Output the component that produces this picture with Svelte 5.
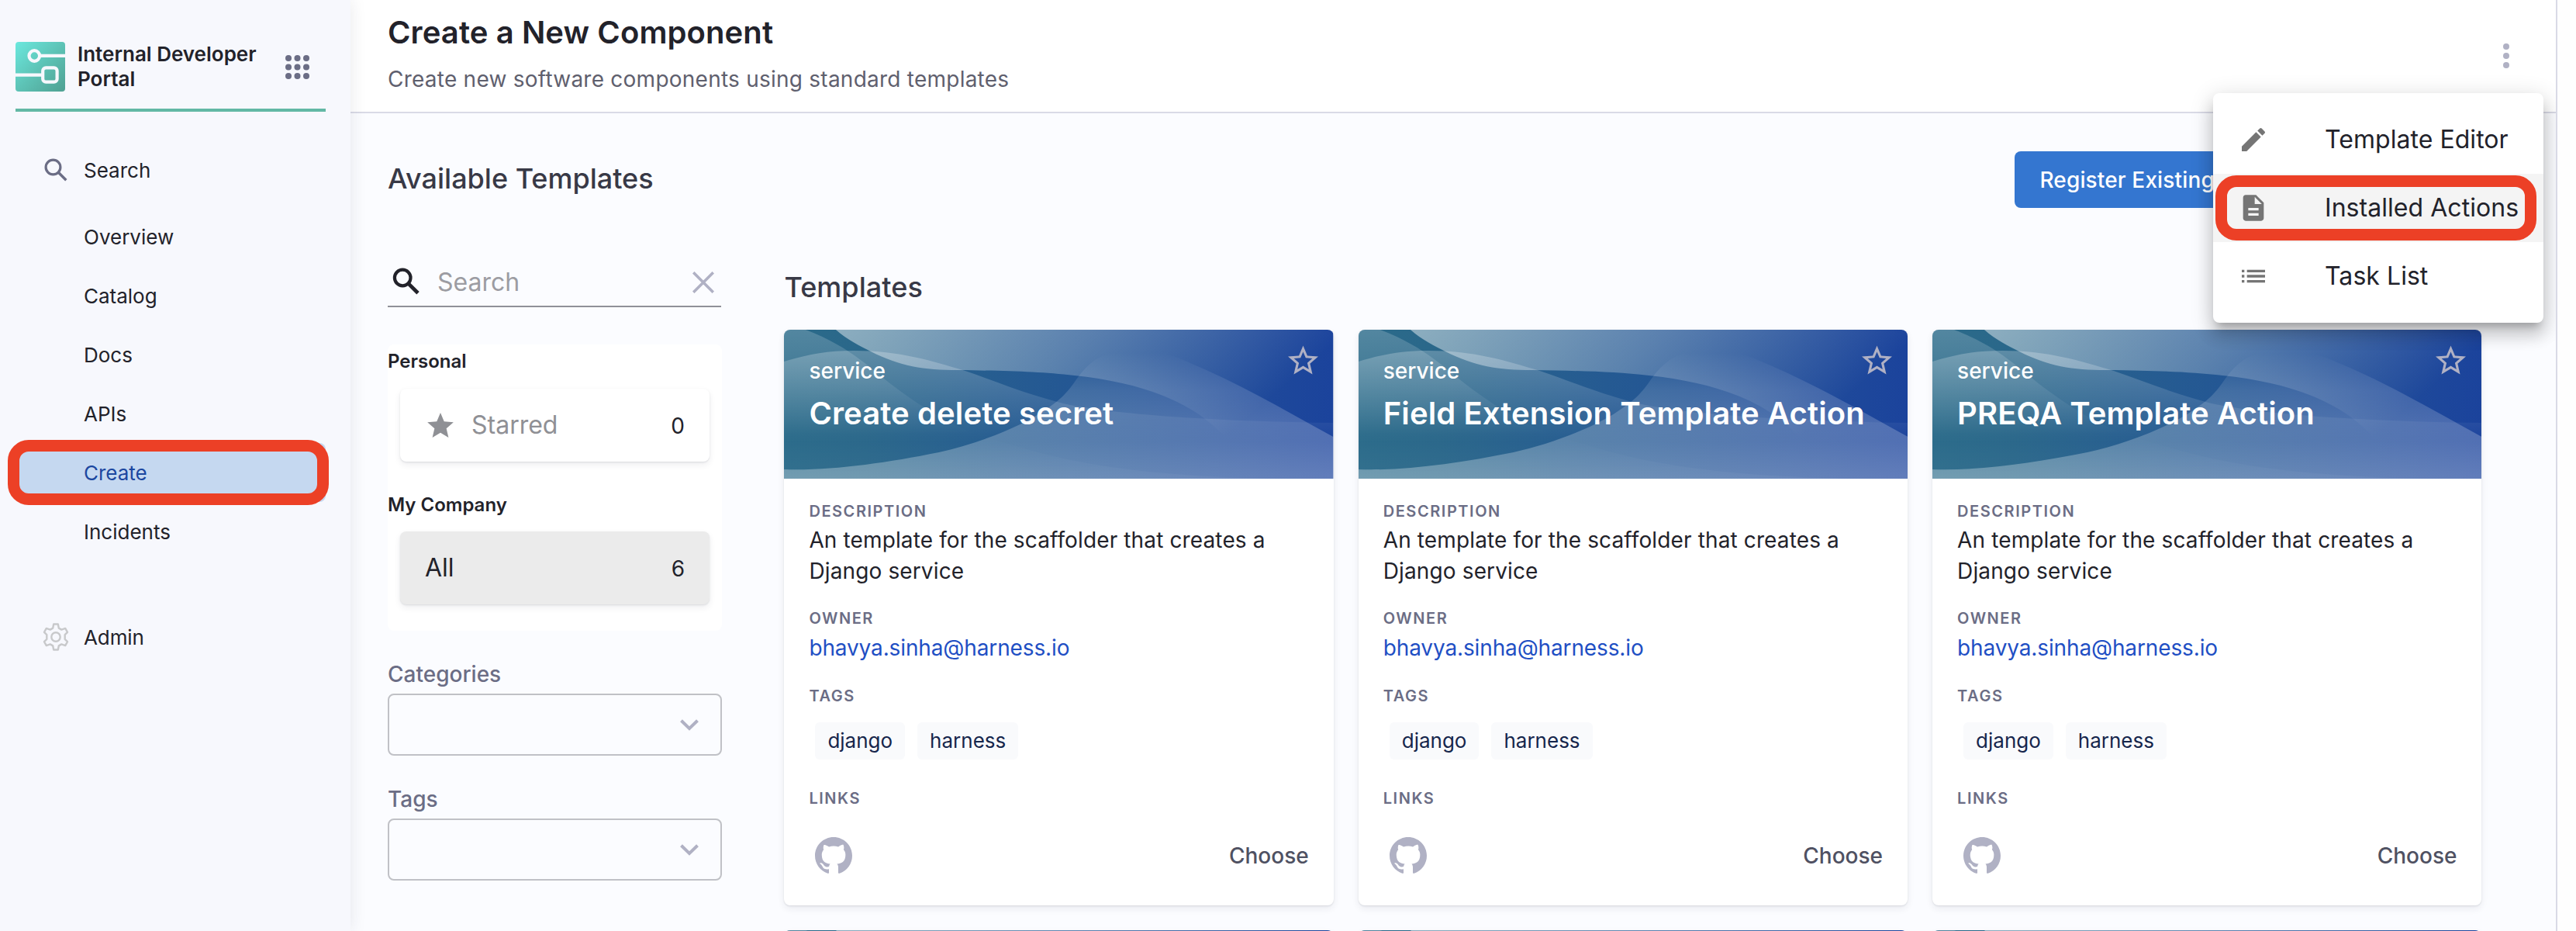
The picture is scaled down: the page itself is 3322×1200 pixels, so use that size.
<script>
  const navItems = ['Overview', 'Catalog', 'Docs', 'APIs', 'Create', 'Incidents'];
  const cards = ['Create delete secret', 'Field Extension Template Action', 'PREQA Template Action'];
  const tags = ['django', 'harness'];
  const filters = ['Categories', 'Tags'];
  const dots = [4, 15.5, 27];
</script>

{#snippet waves()}
  <svg class="waves" viewBox="0 0 709 192" preserveAspectRatio="none" aria-hidden="true">
    <use href="#wave-art" />
  </svg>
{/snippet}

<div class="page">
  <svg class="defs" width="0" height="0" aria-hidden="true">
    <defs>
      <linearGradient id="w-base" x1="0" y1="0" x2="709" y2="0" gradientUnits="userSpaceOnUse">
        <stop offset="0" stop-color="#2b6b8a" />
        <stop offset="0.15" stop-color="#2a678a" />
        <stop offset="0.45" stop-color="#255a92" />
        <stop offset="0.85" stop-color="#1f4a9a" />
        <stop offset="1" stop-color="#1b439c" />
      </linearGradient>
      <linearGradient id="w-top" x1="70" y1="0" x2="352" y2="327" gradientUnits="userSpaceOnUse">
        <stop offset="0" stop-color="#fff" stop-opacity="0.46" />
        <stop offset="0.5" stop-color="#fff" stop-opacity="0.25" />
        <stop offset="1" stop-color="#fff" stop-opacity="0" />
      </linearGradient>
      <linearGradient id="w-mid" x1="0" y1="27" x2="0" y2="145" gradientUnits="userSpaceOnUse">
        <stop offset="0" stop-color="#fff" stop-opacity="0.24" />
        <stop offset="1" stop-color="#fff" stop-opacity="0" />
      </linearGradient>
      <linearGradient id="w-low" x1="0" y1="30" x2="0" y2="192" gradientUnits="userSpaceOnUse">
        <stop offset="0" stop-color="#fff" stop-opacity="0" />
        <stop offset="0.3" stop-color="#fff" stop-opacity="0.14" />
        <stop offset="1" stop-color="#fff" stop-opacity="0.31" />
      </linearGradient>
      <linearGradient id="w-left" x1="0" y1="0" x2="0" y2="192" gradientUnits="userSpaceOnUse">
        <stop offset="0" stop-color="#fff" stop-opacity="0.19" />
        <stop offset="0.7" stop-color="#fff" stop-opacity="0" />
        <stop offset="1" stop-color="#fff" stop-opacity="0.04" />
      </linearGradient>
      <g id="wave-art">
        <rect width="709" height="192" fill="url(#w-base)" />
        <path fill="url(#w-top)" d="M67 0C82 13 98 21 112 28C150 47 180 52 225 52C290 53 330 54 375 59C460 68 530 92 572 142L709 142V0Z" />
        <path fill="url(#w-mid)" d="M0 41C30 32 55 27 90 27C150 27 190 40 234 53C275 67 310 82 360 95C430 110 560 118 709 120V192H0Z" />
        <path fill="url(#w-low)" d="M0 180C60 182 130 172 200 158C250 147 310 124 342 100C378 76 374 58 403 38C430 22 480 22 520 41C590 70 650 106 709 138V192H0Z" />
        <path fill="url(#w-left)" d="M28 0C90 24 110 50 150 79C210 122 240 134 290 147C380 176 480 189 640 192H0V0Z" />
      </g>
    </defs>
  </svg>

  <aside class="sidebar">
    <div class="brand">
      <svg class="logo" viewBox="0 0 64 64">
        <defs>
          <linearGradient id="logo-g" x1="0" y1="0" x2="1" y2="1">
            <stop offset="0" stop-color="#6be8de" />
            <stop offset="0.5" stop-color="#5dc3b6" />
            <stop offset="1" stop-color="#4fa092" />
          </linearGradient>
        </defs>
        <rect width="64" height="64" rx="4" fill="url(#logo-g)" />
        <g fill="none" stroke="#f7f8fd" stroke-width="4.2">
          <circle cx="24.3" cy="18" r="6.8" />
          <path d="M32 17.8H64M0 42.6H34" />
          <rect x="35.2" y="33.3" width="18.4" height="18.4" rx="4" />
        </g>
      </svg>
      <div class="brand-name">Internal Developer Portal</div>
      <svg class="grid-icon" viewBox="0 0 31 31" fill="#6b6d85">
        {#each dots as y}{#each dots as x}<circle cx={x} cy={y} r="4" />{/each}{/each}
      </svg>
    </div>
    <nav>
      <div class="nav-item search">
        <svg class="nav-search" viewBox="0 0 30 30" fill="none" stroke="#6b6d85">
          <circle cx="11.5" cy="11.5" r="9.4" stroke-width="3.2" />
          <path d="M18.3 18.3L28.3 28.3" stroke-width="3.4" />
        </svg>
        Search
      </div>
      {#each navItems as item}
        <div class="nav-item" class:active={item === 'Create'}>
          {item}
          {#if item === 'Create'}<span class="ring nav-ring"></span>{/if}
        </div>
      {/each}
      <div class="nav-item admin">
        <svg class="gear" viewBox="0 0 34 36" fill="none" stroke="#c8c9cb" stroke-width="2.4" stroke-linejoin="round">
          <path d="M14.2 1.5H19.8L20.8 6.6L24.3 8.6L29.2 6.9L32 11.8L28.7 15.2V20.8L32 24.2L29.2 29.1L24.3 27.4L20.8 29.4L19.8 34.5H14.2L13.2 29.4L9.7 27.4L4.8 29.1L2 24.2L5.3 20.8V15.2L2 11.8L4.8 6.9L9.7 8.6L13.2 6.6Z" />
          <circle cx="17" cy="18" r="5.7" />
        </svg>
        Admin
      </div>
    </nav>
  </aside>

  <main>
    <header>
      <div>
        <h1>Create a New Component</h1>
        <p class="subtitle">Create new software components using standard templates</p>
      </div>
      <svg class="kebab" viewBox="0 0 8 32" fill="#b0b1c4">
        <circle cx="4" cy="4" r="4" /><circle cx="4" cy="16" r="4" /><circle cx="4" cy="28" r="4" />
      </svg>
    </header>

    <div class="content">
      <div class="toolbar">
        <h2>Available Templates</h2>
        <button class="register">Register Existing Component</button>
      </div>

      <div class="columns">
        <section class="filters">
          <div class="search-box">
            <svg class="mag" viewBox="0 0 36 36" fill="none" stroke="#22222a">
              <circle cx="13.2" cy="13" r="10.3" stroke-width="4.2" />
              <path d="M20.8 20.6L33 32.8" stroke-width="4.8" />
            </svg>
            <span>Search</span>
            <svg class="close" viewBox="0 0 28 28" fill="none" stroke="#b0b1c4" stroke-width="3.6">
              <path d="M1.2 1.2L26.8 26.8M26.8 1.2L1.2 26.8" />
            </svg>
          </div>

          <div class="panel">
            <h4>Personal</h4>
            <div class="entry starred">
              <svg class="star" viewBox="2 2 20 19" fill="#8f9095">
                <path d="M12 17.27L18.18 21l-1.64-7.03L22 9.24l-7.19-.61L12 2 9.19 8.63 2 9.24l5.46 4.73L5.82 21z" />
              </svg>
              <span class="label">Starred</span><span class="count">0</span>
            </div>
            <h4 class="company">My Company</h4>
            <div class="entry all"><span class="label">All</span><span class="count">6</span></div>
          </div>

          {#each filters as f}
            <div class="field">
              <span class="field-label">{f}</span>
              <div class="select">
                <svg viewBox="0 0 24 15" fill="none" stroke="#b0b1c4" stroke-width="4"><path d="M1.5 1.7L12 12L22.5 1.7" /></svg>
              </div>
            </div>
          {/each}
        </section>

        <section class="results">
          <h3>Templates</h3>
          <div class="cards">
            {#each cards as title}
              <article class="card">
                <div class="banner">
                  {@render waves()}
                  <div class="banner-text">
                    <span class="kind">service</span>
                    <span class="title">{title}</span>
                  </div>
                  <svg class="fav" viewBox="2 2 20 19" fill="#b0b1c4">
                    <path d="M22 9.24l-7.19-.62L12 2 9.19 8.63 2 9.24l5.46 4.73L5.82 21 12 17.27 18.18 21l-1.63-7.03L22 9.24zM12 15.4l-3.76 2.27 1-4.28-3.32-2.88 4.38-.38L12 6.1l1.71 4.04 4.38.38-3.32 2.88 1 4.28L12 15.4z" />
                  </svg>
                </div>
                <div class="card-body">
                  <h5>DESCRIPTION</h5>
                  <p class="desc">An template for the scaffolder that creates a Django service</p>
                  <h5 class="owner-h">OWNER</h5>
                  <p class="owner">bhavya.sinha@harness.io</p>
                  <h5 class="tags-h">TAGS</h5>
                  <div class="tags">
                    {#each tags as t}<span class="tag">{t}</span>{/each}
                  </div>
                  <h5 class="links-h">LINKS</h5>
                  <div class="actions">
                    <svg class="github" viewBox="0 0 16 16" fill="#b0b1c4">
                      <path d="M8 0C3.58 0 0 3.58 0 8c0 3.54 2.29 6.53 5.47 7.59.4.07.55-.17.55-.38 0-.19-.01-.82-.01-1.49-2.01.37-2.53-.49-2.69-.94-.09-.23-.48-.94-.82-1.13-.28-.15-.68-.52-.01-.53.63-.01 1.08.58 1.23.82.72 1.21 1.87.87 2.33.66.07-.52.28-.87.51-1.07-1.78-.2-3.64-.89-3.64-3.95 0-.87.31-1.59.82-2.15-.08-.2-.36-1.02.08-2.12 0 0 .67-.21 2.2.82.64-.18 1.32-.27 2-.27s1.36.09 2 .27c1.53-1.04 2.2-.82 2.2-.82.44 1.1.16 1.92.08 2.12.51.56.82 1.27.82 2.15 0 3.07-1.87 3.75-3.65 3.95.29.25.54.73.54 1.48 0 1.07-.01 1.93-.01 2.2 0 .21.15.46.55.38A8.01 8.01 0 0 0 16 8c0-4.42-3.58-8-8-8z" />
                    </svg>
                    <span class="choose">Choose</span>
                  </div>
                </div>
              </article>
            {/each}
            {#each cards as title}
              <article class="card"><div class="banner">{@render waves()}</div></article>
            {/each}
          </div>
        </section>
      </div>
    </div>

    <div class="menu">
      <div class="menu-item">
        <svg viewBox="0 0 24 24"><path d="M3 17.25V21h3.75L17.81 9.94l-3.75-3.75L3 17.25zM20.71 7.04c.39-.39.39-1.02 0-1.41l-2.34-2.34a.9959.9959 0 0 0-1.41 0l-1.83 1.83 3.75 3.75 1.83-1.83z" /></svg>
        <span>Template Editor</span>
      </div>
      <div class="menu-item hover">
        <svg viewBox="0 0 24 24"><path d="M14 2H6c-1.1 0-1.99.9-1.99 2L4 20c0 1.1.89 2 1.99 2H18c1.1 0 2-.9 2-2V8l-6-6zm2 16H8v-2h8v2zm0-4H8v-2h8v2zm-3-5V3.5L18.5 9H13z" /></svg>
        <span>Installed Actions</span>
        <i class="ring menu-ring"></i>
      </div>
      <div class="menu-item">
        <svg viewBox="0 0 24 24"><path d="M3 13h2v-2H3v2zm0 4h2v-2H3v2zm0-8h2V7H3v2zm4 4h14v-2H7v2zm0 4h14v-2H7v2zM7 7v2h14V7H7z" /></svg>
        <span>Task List</span>
      </div>
    </div>
  </main>
</div>

<style>
  :global(body) { margin: 0; overflow: hidden; }
  * { box-sizing: border-box; }
  h1, h2, h3, h4, h5, p { margin: 0; }
  svg { display: block; flex: none; }
  .defs { position: absolute; }
  .page {
    display: flex; width: 3322px; height: 1200px; overflow: hidden;
    background: #fefefe; color: #22222a; font-family: Inter, sans-serif;
  }

  .sidebar {
    width: 452px; flex: none; padding: 54px 32px 0 20px; background: #f7f8fd;
    box-shadow: 0 0 20px rgba(40, 41, 61, 0.1); position: relative; z-index: 2;
  }
  .brand {
    display: flex; height: 90px; width: 400px; border-bottom: 4px solid #62b8a5;
  }
  .logo { width: 64px; height: 64px; }
  .brand-name { width: 250px; margin-left: 16px; font-size: 26px; line-height: 32px; font-weight: 600; }
  .grid-icon { width: 31px; height: 31px; margin: 17px 0 0 18px; }
  nav { padding-top: 37px; }
  .nav-item {
    position: relative; display: flex; align-items: center; height: 76px; width: 400px;
    padding-left: 88px; font-size: 26px; border-radius: 8px;
  }
  .nav-item.search { margin-bottom: 10px; padding-left: 37px; gap: 21px; }
  .nav-item.admin { margin-top: 60px; padding-left: 35px; gap: 19px; letter-spacing: -0.1px; }
  .nav-search { width: 30px; height: 30px; }
  .gear { width: 34px; height: 36px; }
  .nav-item.active { background: #c5d8f0; color: #1c47a0; }
  .ring { position: absolute; border: 15px solid #ec4026; border-radius: 27px; }
  .nav-ring { left: -10px; top: -4px; width: 414px; height: 84px; }

  main {
    position: relative; width: 2846px; flex: none; background: #fbfcff;
    border-right: 2px solid #d9dae6; overflow: hidden;
  }
  header {
    display: flex; justify-content: space-between; height: 146px; padding: 18px 60px 0 48px;
    background: #fff; border-bottom: 2px solid #d9dae6;
  }
  h1 { font-size: 40px; line-height: 48px; font-weight: 600; letter-spacing: 0.1px; }
  .subtitle {
    margin-top: 19px; font-size: 28px; line-height: 34px; letter-spacing: 0.24px; color: #5f606e;
  }
  .kebab { width: 8px; height: 32px; margin-top: 38px; }

  .content { padding: 49px 95.6px 0 48px; }
  .toolbar { display: flex; justify-content: space-between; height: 73px; padding-right: 80px; }
  h2, h3 { font-size: 36px; font-weight: 500; color: #383946; }
  h2 { line-height: 70px; }
  .register {
    width: 522px; padding: 0 32px; border: 0; border-radius: 8px; background: #3476d0;
    color: #fff; font: 500 28px Inter, sans-serif; letter-spacing: 0.14px; text-align: left; white-space: nowrap;
  }
  .columns { display: flex; gap: 80.4px; padding-top: 64px; }
  .filters { width: 431px; flex: none; }
  .search-box {
    display: flex; align-items: center; width: 430px; height: 64px; padding: 0 9px 0 6px;
    border-bottom: 2px solid #909198; font-size: 32px; color: #9c9ca2;
  }
  .search-box span { flex: 1; margin-left: 22px; }
  .mag { width: 36px; height: 36px; }
  .close { width: 28px; height: 28px; margin-top: 2px; }

  .panel { margin-top: 48px; height: 369px; padding-top: 6px; border-radius: 8px; background: #fff; }
  h4 { height: 31px; font-size: 24px; line-height: 31px; font-weight: 600; }
  .entry {
    display: flex; align-items: center; margin: 20px 16px 0; height: 94px; padding: 0 32px;
    border-radius: 8px; font-size: 32px;
    box-shadow: 0 1px 2px rgba(96, 97, 112, 0.16), 0 4px 8px rgba(40, 41, 61, 0.08);
  }
  .starred { padding-left: 35px; color: #8f9095; }
  .label { padding-bottom: 2px; }
  .star { width: 34px; height: 32px; }
  .starred .label { margin-left: 23px; }
  .count { margin-left: auto; padding-top: 2px; font-size: 28px; color: #22222a; }
  .company { margin-top: 40px; }
  .company + .entry { margin-top: 19px; }
  .all { background: #ebebeb; }

  .field { margin-top: 39px; }
  .field-label { display: block; height: 42px; font-size: 28px; line-height: 34px; font-weight: 500; color: #6b6d85; }
  .select {
    display: flex; align-items: center; justify-content: flex-end; height: 80px; padding-right: 28px;
    border: 2px solid #c0c1c6; border-radius: 8px;
  }
  .select svg { width: 24px; height: 15px; }

  .results { flex: 1; }
  h3 { padding: 14px 0 31px; line-height: 48px; letter-spacing: 0.05px; }
  .cards { display: grid; grid-template-columns: repeat(3, 1fr); gap: 32px; }
  .card {
    height: 742px; background: #fff; border-radius: 8px; overflow: hidden;
    box-shadow: 0 1px 2px rgba(96, 97, 112, 0.16), 0 4px 10px rgba(40, 41, 61, 0.08);
  }
  .banner { position: relative; display: flex; justify-content: space-between; height: 192px; padding: 36px 20px 0 32px; }
  .waves { position: absolute; inset: 0; width: 100%; height: 100%; }
  .banner-text { position: relative; display: flex; flex-direction: column; color: #fff; white-space: nowrap; }
  .kind { font-size: 28px; line-height: 34px; font-weight: 500; }
  .title { margin-top: 14px; font-size: 40px; line-height: 48px; font-weight: 600; letter-spacing: 0.1px; }
  .fav { position: absolute; right: 20px; top: 20px; width: 39px; height: 38px; }
  .card-body { padding: 30px 32px 0; }
  h5 { font-size: 20px; line-height: 24px; font-weight: 600; letter-spacing: 1.55px; color: #6b6d85; }
  .desc, .owner { margin-top: 5px; font-size: 28px; line-height: 40px; }
  .desc { letter-spacing: 0.13px; }
  .owner-h { margin-top: 29px; }
  .owner { margin-top: 6px; color: #1f4fc4; letter-spacing: -0.13px; }
  .tags-h { margin-top: 30px; }
  .tags { display: flex; gap: 16px; margin: 22px 0 0 8px; }
  .tag {
    height: 48px; padding: 0 16px; border-radius: 6px; background: #f9fafc; color: #16264c;
    font-size: 26px; line-height: 47px;
  }
  .links-h { margin-top: 38px; }
  .actions { display: flex; align-items: center; justify-content: space-between; margin-top: 38px; padding-left: 8px; }
  .github { width: 48px; height: 48px; }
  .choose { font-size: 28px; font-weight: 500; color: #4f5162; }

  .menu {
    position: absolute; z-index: 3; right: 16px; top: 120px; width: 426px; height: 296px; padding: 16px 0;
    background: #fff; border-radius: 8px;
    box-shadow: 0 10px 10px -6px rgba(0, 0, 0, 0.2), 0 16px 20px 2px rgba(0, 0, 0, 0.14), 0 6px 28px 4px rgba(0, 0, 0, 0.12);
  }
  .menu-item { position: relative; display: flex; align-items: center; height: 88px; padding-left: 32px; font-size: 32px; letter-spacing: 0.05px; white-space: nowrap; }
  .menu-item span { padding-bottom: 2px; }
  .menu-item svg { width: 40px; height: 40px; margin-right: 72px; fill: #757575; }
  .hover { background: #f4f4f4; }
  .menu-ring { left: 3px; top: 2px; width: 414px; height: 84px; }
</style>
